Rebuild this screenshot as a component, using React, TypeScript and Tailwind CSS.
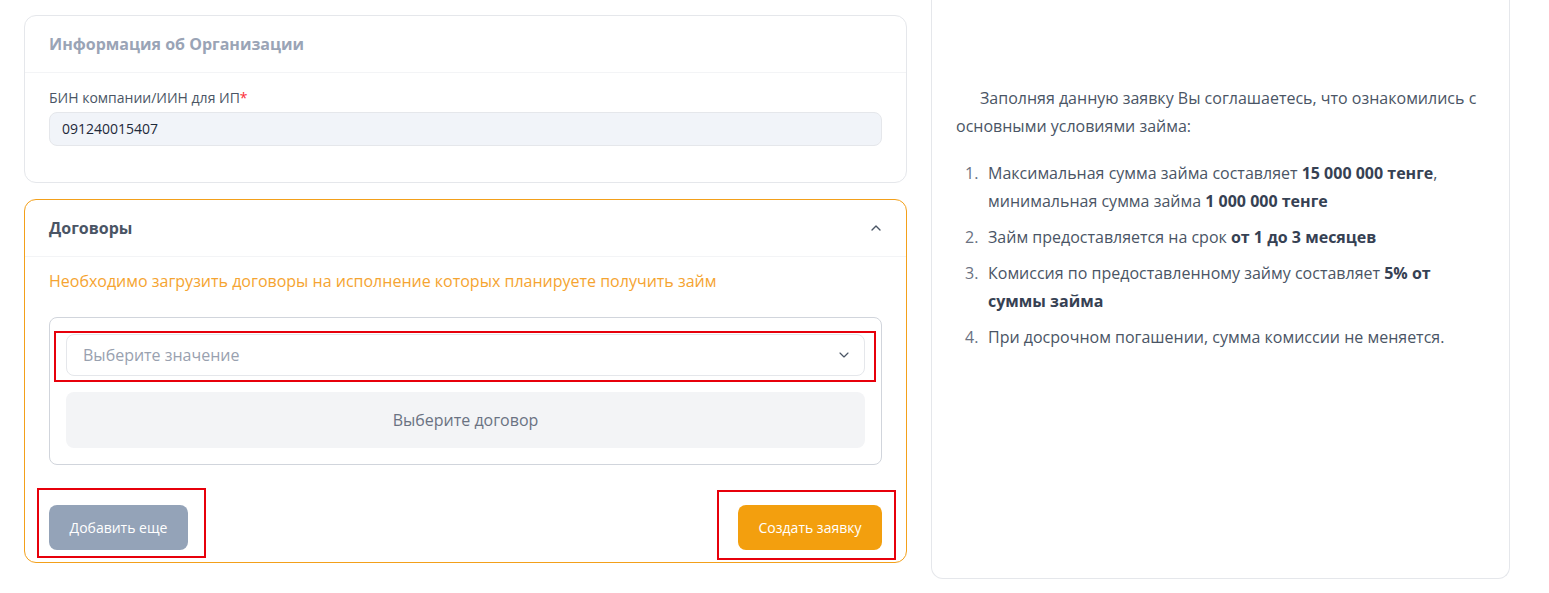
import { ChevronDown, ChevronUp } from "lucide-react"

const terms = [
  <>
    Максимальная сумма займа составляет <b className="text-gray-700">15 000 000 тенге</b>, минимальная сумма займа <b className="text-gray-700">1 000 000 тенге</b>
  </>,
  <>
    Займ предоставляется на срок <b className="text-gray-700">от 1 до 3 месяцев</b>
  </>,
  <>
    Комиссия по предоставленному займу составляет <b className="text-gray-700">5% от суммы займа</b>
  </>,
  <>При досрочном погашении, сумма комиссии не меняется.</>,
]

export default function App() {
  return (
    <div className="min-h-[593px] bg-white flex items-start gap-6 pl-6 text-gray-700" style={{ fontFamily: '"Open Sans", "Noto Sans", sans-serif' }}>
      <div className="w-[883px] pt-[15px] flex flex-col gap-4">
        {/* org info */}
        <div className="border border-gray-200 rounded-xl bg-white">
          <div className="px-6 py-4 border-b border-gray-100">
            <h2 className="text-base leading-6 font-bold text-[#9aa4b6]">Информация об Организации</h2>
          </div>
          <div className="px-6 pt-[15px] pb-9">
            <label className="block text-sm leading-5 text-gray-600">
              БИН компании/ИИН для ИП<span className="text-red-500">*</span>
            </label>
            <div className="mt-[4px] h-[34px] flex items-center px-3 bg-[#f1f4f9] border border-gray-200 rounded-lg text-sm text-gray-800">
              091240015407
            </div>
          </div>
        </div>

        {/* contracts */}
        <div className="border border-[#f3a01a] rounded-xl bg-white">
          <div className="px-6 py-4 border-b border-gray-100 flex items-center justify-between">
            <h2 className="text-base leading-6 font-bold text-gray-600">Договоры</h2>
            <ChevronUp className="w-4 h-4 text-gray-600 mr-[-2px]" strokeWidth={2} />
          </div>
          <div className="px-6 pt-3 pb-3">
            <p className="text-base leading-6 text-[#f5a431]">
              Необходимо загрузить договоры на исполнение которых планируете получить займ
            </p>
            <div className="mt-6 border border-gray-300 rounded-lg p-4 flex flex-col gap-4">
              <div className="relative">
                <div className="h-[42px] border border-gray-200 rounded-lg flex items-center justify-between px-4 text-base text-gray-400">
                  <span>Выберите значение</span>
                  <ChevronDown className="w-4 h-4 text-gray-600 mr-[-4px]" strokeWidth={1.75} />
                </div>
                <div className="absolute top-[-3px] bottom-[-6px] left-[-12px] right-[-11px] border-2 border-red-600 pointer-events-none" />
              </div>
              <div className="h-[56px] bg-gray-100 rounded-lg flex items-center justify-center text-base text-gray-500">
                Выберите договор
              </div>
            </div>
            <div className="mt-[40px] flex items-center justify-between">
              <div className="relative">
                <button className="h-[45px] w-[139px] rounded-lg bg-[#94a3b8] text-white text-sm font-medium">
                  Добавить еще
                </button>
                <div className="absolute top-[-17px] bottom-[-8px] left-[-12px] right-[-18px] border-2 border-red-600 pointer-events-none" />
              </div>
              <div className="relative">
                <button className="h-[45px] w-[144px] rounded-lg bg-[#f39f0e] text-white text-sm font-medium">
                  Создать заявку
                </button>
                <div className="absolute top-[-15px] bottom-[-10px] left-[-21px] right-[-14px] border-2 border-red-600 pointer-events-none" />
              </div>
            </div>
          </div>
        </div>
      </div>

      {/* terms */}
      <div className="w-[579px] h-[579px] border-x border-b border-gray-200 rounded-b-xl px-6 pt-[84px] text-base leading-7 text-gray-600">
        <p className="indent-6">
          Заполняя данную заявку Вы соглашаетесь, что ознакомились с основными условиями займа:
        </p>
        <ol className="mt-[19px] flex flex-col gap-2">
          {terms.map((t, i) => (
            <li key={i} className="flex">
              <span className="ml-[9px] w-[23px] shrink-0 text-gray-500">{i + 1}.</span>
              <span>{t}</span>
            </li>
          ))}
        </ol>
      </div>
    </div>
  )
}
